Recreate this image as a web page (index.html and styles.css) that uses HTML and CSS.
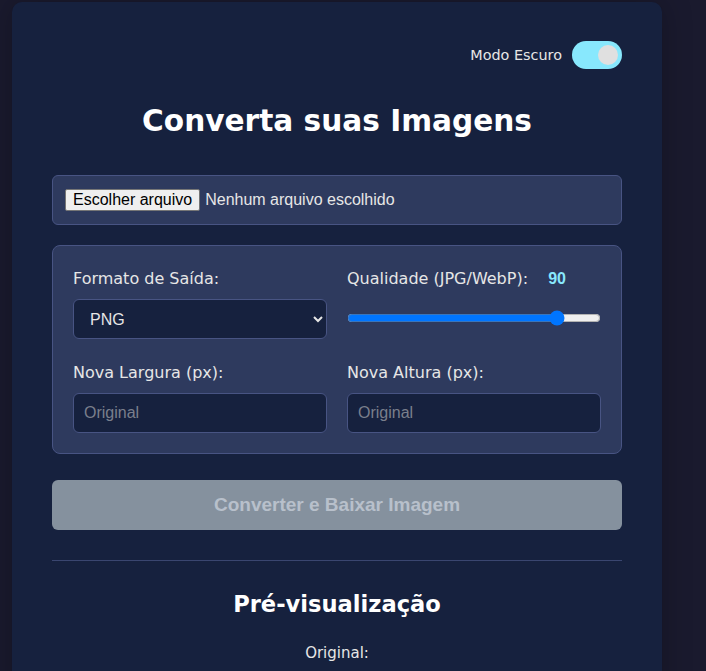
FILE: index.html
```html
<!DOCTYPE html>
<html lang="pt-BR">
<head>
<meta charset="utf-8">
<title>Conversor de Imagens</title>
<link rel="stylesheet" href="styles.css">
</head>
<body>
<main class="card">
  <div class="theme-row">
    <span class="theme-label">Modo Escuro</span>
    <span class="switch"><span class="knob"></span></span>
  </div>
  <h1 class="title">Converta suas Imagens</h1>
  <div class="file-box">
    <label class="file-picker">
      <span class="file-button">Escolher arquivo</span>
      <span class="file-name">Nenhum arquivo escolhido</span>
    </label>
  </div>
  <div class="options">
    <div class="field">
      <label class="label">Formato de Saída:</label>
      <select class="control">
        <option>PNG</option>
        <option>JPG</option>
        <option>WebP</option>
      </select>
    </div>
    <div class="field">
      <label class="label">Qualidade (JPG/WebP): <span class="quality">90</span></label>
      <input type="range" class="range" min="1" max="100" value="85">
    </div>
    <div class="field">
      <label class="label">Nova Largura (px):</label>
      <input type="text" class="control" placeholder="Original">
    </div>
    <div class="field">
      <label class="label">Nova Altura (px):</label>
      <input type="text" class="control" placeholder="Original">
    </div>
  </div>
  <button class="convert" disabled>Converter e Baixar Imagem</button>
  <hr class="divider">
  <h2 class="subtitle">Pré-visualização</h2>
  <p class="caption">Original:</p>
</main>
</body>
</html>
```
FILE: styles.css
```css
html, body {
  margin: 0;
  padding: 0;
  background: #1a1a2e;
  height: 100%;
  overflow: hidden;
}
body {
  font-family: "DejaVu Sans", "Open Sans", sans-serif;
  color: #e6e6e6;
}
.card {
  box-sizing: border-box;
  width: 650px;
  margin: 2px 0 0 12px;
  padding: 38px 40px 40px;
  background: #16213e;
  border-radius: 10px;
  box-shadow: 0 0 30px rgba(0, 0, 0, 0.25);
  min-height: 700px;
}
.theme-row {
  display: flex;
  justify-content: flex-end;
  align-items: center;
  gap: 10px;
  height: 30px;
}
.theme-label {
  font-size: 14.4px;
  color: #e6e6e6;
}
.switch {
  position: relative;
  width: 50px;
  height: 28px;
  border-radius: 14px;
  background: #88e8fd;
}
.knob {
  position: absolute;
  right: 4px;
  top: 4px;
  width: 20px;
  height: 20px;
  border-radius: 50%;
  background: #e0e0e0;
}
.title {
  margin: 27px 0 0;
  text-align: center;
  font-size: 29.6px;
  font-weight: 700;
  color: #ffffff;
  line-height: 48px;
}
.file-box {
  margin-top: 30px;
  background: #2e3a5e;
  border: 1px solid #485483;
  border-radius: 6px;
  padding: 13px 12px 12px;
  height: 23px;
}
.file-picker {
  display: flex;
  align-items: center;
  gap: 5px;
  font-family: "Liberation Sans", Arial, sans-serif;
  font-size: 16px;
}
.file-button {
  box-sizing: border-box;
  height: 22px;
  line-height: 20px;
  background: #efefef;
  border: 1px solid #767676;
  border-radius: 2px;
  padding: 0 7px;
  color: #000;
}
.file-name {
  color: #e6e6e6;
}
.options {
  margin-top: 20px;
  background: #2e3a5e;
  border: 1px solid #485483;
  border-radius: 8px;
  padding: 22px 20px 20px;
  display: grid;
  grid-template-columns: 1fr 1fr;
  column-gap: 20px;
  row-gap: 23px;
}
.field {
  display: flex;
  flex-direction: column;
}
.label {
  font-size: 16px;
  color: #e6e6e6;
  line-height: 22px;
  margin-bottom: 9px;
}
.quality {
  font-family: "Liberation Sans", Arial, sans-serif;
  font-weight: 700;
  font-size: 16px;
  color: #88e8fd;
  margin-left: 15px;
}
.control {
  box-sizing: border-box;
  height: 40px;
  width: 100%;
  background: #16213e;
  border: 1px solid #485483;
  border-radius: 6px;
  color: #e6e6e6;
  font-family: "Liberation Sans", Arial, sans-serif;
  font-size: 16px;
  padding: 0 10px;
}
select.control {
  padding-left: 12px;
}
.control::placeholder {
  color: #7a7f8c;
}
.range {
  width: 100%;
  margin: 11px 0 0;
  accent-color: #0075ff;
}
.convert {
  display: block;
  width: 100%;
  margin-top: 26px;
  height: 50px;
  border: none;
  border-radius: 6px;
  background: #85919e;
  color: #b8c0cb;
  font-family: "Liberation Sans", Arial, sans-serif;
  font-weight: 700;
  font-size: 19px;
}
.divider {
  border: none;
  border-top: 1px solid #3a4670;
  margin: 30px 0 0;
}
.subtitle {
  margin: 28px 0 0;
  text-align: center;
  font-size: 22.6px;
  font-weight: 700;
  color: #ffffff;
  line-height: 30px;
}
.caption {
  margin: 25px 0 0;
  text-align: center;
  font-size: 15px;
  color: #e6e6e6;
}
```
